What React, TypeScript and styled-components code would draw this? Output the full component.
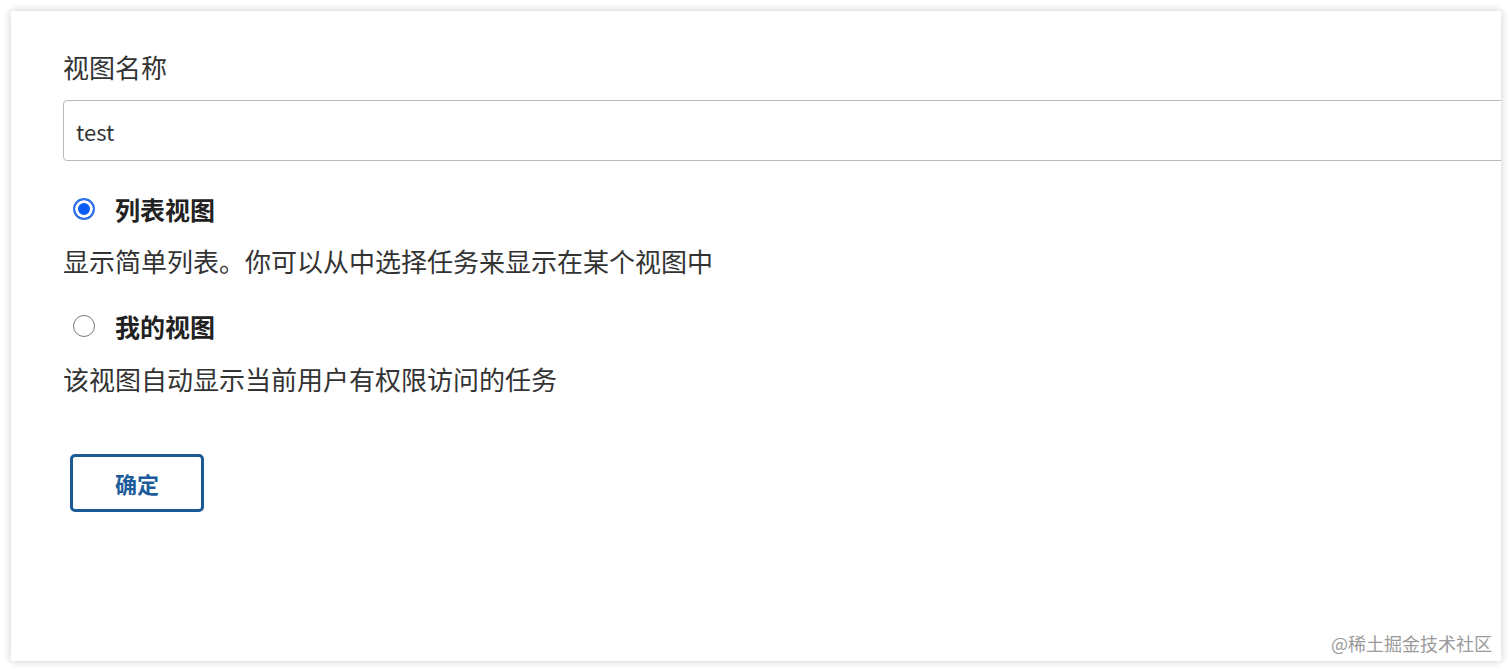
import React from 'react'
import styled, { createGlobalStyle } from 'styled-components'

const GlobalStyle = createGlobalStyle`
  html, body {
    margin: 0;
    padding: 0;
    background: #ffffff;
    font-family: "Noto Sans CJK SC", "Noto Sans", sans-serif;
    color: #333333;
  }
`

const Page = styled.div`
  width: 1512px;
  height: 672px;
  padding: 11px;
  box-sizing: border-box;
`

const Card = styled.div`
  position: relative;
  height: 650px;
  box-sizing: border-box;
  padding: 38px 0 0 52px;
  background: #ffffff;
  border-radius: 2px;
  box-shadow: 0 0 8px rgba(0, 0, 0, 0.22);
  overflow: hidden;
`

const FieldLabel = styled.div`
  font-size: 26px;
  line-height: 36px;
  color: #333333;
`

const TextInput = styled.input`
  display: block;
  width: 1500px;
  height: 61px;
  margin-top: 15px;
  padding: 0 12px;
  box-sizing: border-box;
  border: 1px solid #b9b9b9;
  border-radius: 4px;
  font-family: inherit;
  font-size: 22px;
  color: #333333;
  outline: none;
`

const OptionRow = styled.label<{ $gap: number }>`
  display: flex;
  align-items: center;
  gap: 20px;
  height: 36px;
  margin-top: ${p => p.$gap}px;
  padding-left: 10px;
  cursor: pointer;
`

const RadioDot = styled.span<{ $checked: boolean }>`
  width: 22px;
  height: 22px;
  box-sizing: border-box;
  border-radius: 50%;
  border: ${p => (p.$checked ? '2px solid #2f6fe8' : '1px solid #7a7a7a')};
  background: ${p => (p.$checked ? '#0b5cf5' : '#ffffff')};
  box-shadow: ${p => (p.$checked ? 'inset 0 0 0 3px #ffffff' : 'none')};
  flex-shrink: 0;
`

const OptionTitle = styled.span`
  font-size: 25px;
  font-weight: 700;
  color: #222222;
  line-height: 36px;
`

const OptionDesc = styled.div<{ $gap: number }>`
  margin-top: ${p => p.$gap}px;
  font-size: 26px;
  line-height: 36px;
  color: #333333;
`

const ConfirmButton = styled.button`
  display: block;
  width: 134px;
  height: 58px;
  margin: 57px 0 0 7px;
  box-sizing: border-box;
  border: 3px solid #1b5a97;
  border-radius: 5px;
  background: #ffffff;
  color: #1d5c9a;
  font-family: inherit;
  font-size: 22px;
  font-weight: 700;
  cursor: pointer;
`

const Watermark = styled.div`
  position: absolute;
  right: 9px;
  bottom: 6px;
  font-size: 18px;
  line-height: 24px;
  color: #9a9a9a;
`

const options = [
  { title: '列表视图', desc: '显示简单列表。你可以从中选择任务来显示在某个视图中', checked: true, rowGap: 30, descGap: 16 },
  { title: '我的视图', desc: '该视图自动显示当前用户有权限访问的任务', checked: false, rowGap: 29, descGap: 17 }
]

export default function App (): JSX.Element {
  return (
    <Page>
      <GlobalStyle />
      <Card>
        <FieldLabel>视图名称</FieldLabel>
        <TextInput defaultValue='test' />
        {options.map(o => (
          <React.Fragment key={o.title}>
            <OptionRow $gap={o.rowGap}>
              <RadioDot $checked={o.checked} />
              <OptionTitle>{o.title}</OptionTitle>
            </OptionRow>
            <OptionDesc $gap={o.descGap}>{o.desc}</OptionDesc>
          </React.Fragment>
        ))}
        <ConfirmButton>确定</ConfirmButton>
        <Watermark>@稀土掘金技术社区</Watermark>
      </Card>
    </Page>
  )
}
